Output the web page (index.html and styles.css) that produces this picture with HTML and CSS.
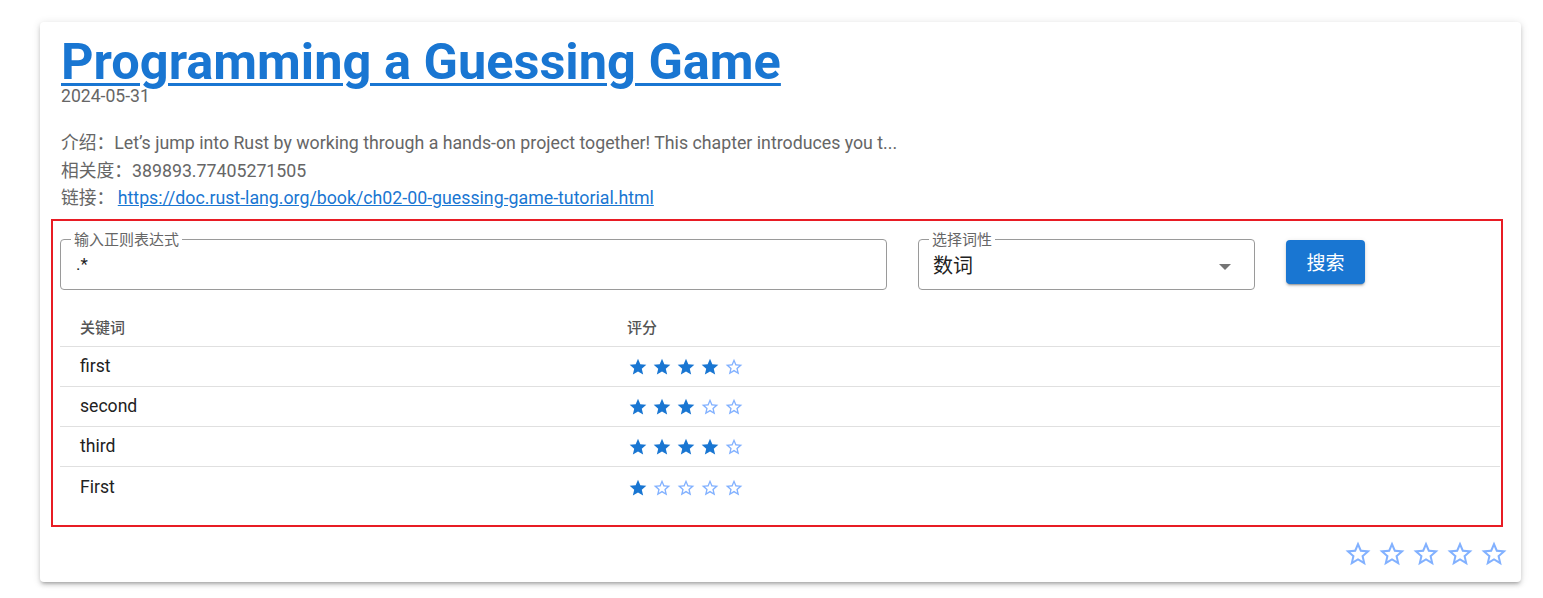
FILE: index.html
```html
<!DOCTYPE html>
<html lang="zh">
<head>
<meta charset="utf-8">
<title>Programming a Guessing Game</title>
<link rel="stylesheet" href="styles.css">
</head>
<body>
<div class="page">
  <div class="card">
    <div class="header">
      <a class="title" href="#">Programming a Guessing Game</a>
      <div class="date">2024-05-31</div>
      <div class="desc">
        <div class="line">介绍：Let’s jump into Rust by working through a hands-on project together! This chapter introduces you t...</div>
        <div class="line">相关度：389893.77405271505</div>
        <div class="line">链接：<a class="link" href="#">https://doc.rust-lang.org/book/ch02-00-guessing-game-tutorial.html</a></div>
      </div>
    </div>

    <div class="panel">
      <div class="form-row">
        <fieldset class="field field-regex">
          <legend>输入正则表达式</legend>
          <div class="value">.*</div>
        </fieldset>
        <fieldset class="field field-select">
          <legend>选择词性</legend>
          <div class="value select-value"><span>数词</span><span class="arrow"></span></div>
        </fieldset>
        <button class="btn" type="button">搜索</button>
      </div>

      <div class="table">
        <div class="tr th">
          <div class="c1">关键词</div>
          <div class="c2">评分</div>
        </div>
        <div class="tr">
          <div class="c1">first</div>
          <div class="c2 stars">
            <svg viewBox="0 0 24 24" class="s on"><path d="M12 17.27L18.18 21l-1.64-7.03L22 9.24l-7.19-.61L12 2 9.19 8.63 2 9.24l5.46 4.73L5.82 21z"/></svg>
            <svg viewBox="0 0 24 24" class="s on"><path d="M12 17.27L18.18 21l-1.64-7.03L22 9.24l-7.19-.61L12 2 9.19 8.63 2 9.24l5.46 4.73L5.82 21z"/></svg>
            <svg viewBox="0 0 24 24" class="s on"><path d="M12 17.27L18.18 21l-1.64-7.03L22 9.24l-7.19-.61L12 2 9.19 8.63 2 9.24l5.46 4.73L5.82 21z"/></svg>
            <svg viewBox="0 0 24 24" class="s on"><path d="M12 17.27L18.18 21l-1.64-7.03L22 9.24l-7.19-.61L12 2 9.19 8.63 2 9.24l5.46 4.73L5.82 21z"/></svg>
            <svg viewBox="0 0 24 24" class="s off"><path d="M22 9.24l-7.19-.62L12 2 9.19 8.63 2 9.24l5.46 4.73L5.82 21 12 17.27 18.18 21l-1.63-7.03L22 9.24zM12 15.4l-3.76 2.27 1-4.28-3.32-2.88 4.38-.38L12 6.1l1.71 4.04 4.38.38-3.32 2.88 1 4.28L12 15.4z"/></svg>
          </div>
        </div>
        <div class="tr">
          <div class="c1">second</div>
          <div class="c2 stars">
            <svg viewBox="0 0 24 24" class="s on"><path d="M12 17.27L18.18 21l-1.64-7.03L22 9.24l-7.19-.61L12 2 9.19 8.63 2 9.24l5.46 4.73L5.82 21z"/></svg>
            <svg viewBox="0 0 24 24" class="s on"><path d="M12 17.27L18.18 21l-1.64-7.03L22 9.24l-7.19-.61L12 2 9.19 8.63 2 9.24l5.46 4.73L5.82 21z"/></svg>
            <svg viewBox="0 0 24 24" class="s on"><path d="M12 17.27L18.18 21l-1.64-7.03L22 9.24l-7.19-.61L12 2 9.19 8.63 2 9.24l5.46 4.73L5.82 21z"/></svg>
            <svg viewBox="0 0 24 24" class="s off"><path d="M22 9.24l-7.19-.62L12 2 9.19 8.63 2 9.24l5.46 4.73L5.82 21 12 17.27 18.18 21l-1.63-7.03L22 9.24zM12 15.4l-3.76 2.27 1-4.28-3.32-2.88 4.38-.38L12 6.1l1.71 4.04 4.38.38-3.32 2.88 1 4.28L12 15.4z"/></svg>
            <svg viewBox="0 0 24 24" class="s off"><path d="M22 9.24l-7.19-.62L12 2 9.19 8.63 2 9.24l5.46 4.73L5.82 21 12 17.27 18.18 21l-1.63-7.03L22 9.24zM12 15.4l-3.76 2.27 1-4.28-3.32-2.88 4.38-.38L12 6.1l1.71 4.04 4.38.38-3.32 2.88 1 4.28L12 15.4z"/></svg>
          </div>
        </div>
        <div class="tr">
          <div class="c1">third</div>
          <div class="c2 stars">
            <svg viewBox="0 0 24 24" class="s on"><path d="M12 17.27L18.18 21l-1.64-7.03L22 9.24l-7.19-.61L12 2 9.19 8.63 2 9.24l5.46 4.73L5.82 21z"/></svg>
            <svg viewBox="0 0 24 24" class="s on"><path d="M12 17.27L18.18 21l-1.64-7.03L22 9.24l-7.19-.61L12 2 9.19 8.63 2 9.24l5.46 4.73L5.82 21z"/></svg>
            <svg viewBox="0 0 24 24" class="s on"><path d="M12 17.27L18.18 21l-1.64-7.03L22 9.24l-7.19-.61L12 2 9.19 8.63 2 9.24l5.46 4.73L5.82 21z"/></svg>
            <svg viewBox="0 0 24 24" class="s on"><path d="M12 17.27L18.18 21l-1.64-7.03L22 9.24l-7.19-.61L12 2 9.19 8.63 2 9.24l5.46 4.73L5.82 21z"/></svg>
            <svg viewBox="0 0 24 24" class="s off"><path d="M22 9.24l-7.19-.62L12 2 9.19 8.63 2 9.24l5.46 4.73L5.82 21 12 17.27 18.18 21l-1.63-7.03L22 9.24zM12 15.4l-3.76 2.27 1-4.28-3.32-2.88 4.38-.38L12 6.1l1.71 4.04 4.38.38-3.32 2.88 1 4.28L12 15.4z"/></svg>
          </div>
        </div>
        <div class="tr last">
          <div class="c1">First</div>
          <div class="c2 stars">
            <svg viewBox="0 0 24 24" class="s on"><path d="M12 17.27L18.18 21l-1.64-7.03L22 9.24l-7.19-.61L12 2 9.19 8.63 2 9.24l5.46 4.73L5.82 21z"/></svg>
            <svg viewBox="0 0 24 24" class="s off"><path d="M22 9.24l-7.19-.62L12 2 9.19 8.63 2 9.24l5.46 4.73L5.82 21 12 17.27 18.18 21l-1.63-7.03L22 9.24zM12 15.4l-3.76 2.27 1-4.28-3.32-2.88 4.38-.38L12 6.1l1.71 4.04 4.38.38-3.32 2.88 1 4.28L12 15.4z"/></svg>
            <svg viewBox="0 0 24 24" class="s off"><path d="M22 9.24l-7.19-.62L12 2 9.19 8.63 2 9.24l5.46 4.73L5.82 21 12 17.27 18.18 21l-1.63-7.03L22 9.24zM12 15.4l-3.76 2.27 1-4.28-3.32-2.88 4.38-.38L12 6.1l1.71 4.04 4.38.38-3.32 2.88 1 4.28L12 15.4z"/></svg>
            <svg viewBox="0 0 24 24" class="s off"><path d="M22 9.24l-7.19-.62L12 2 9.19 8.63 2 9.24l5.46 4.73L5.82 21 12 17.27 18.18 21l-1.63-7.03L22 9.24zM12 15.4l-3.76 2.27 1-4.28-3.32-2.88 4.38-.38L12 6.1l1.71 4.04 4.38.38-3.32 2.88 1 4.28L12 15.4z"/></svg>
            <svg viewBox="0 0 24 24" class="s off"><path d="M22 9.24l-7.19-.62L12 2 9.19 8.63 2 9.24l5.46 4.73L5.82 21 12 17.27 18.18 21l-1.63-7.03L22 9.24zM12 15.4l-3.76 2.27 1-4.28-3.32-2.88 4.38-.38L12 6.1l1.71 4.04 4.38.38-3.32 2.88 1 4.28L12 15.4z"/></svg>
          </div>
        </div>
      </div>
    </div>

    <div class="rating">
      <svg viewBox="0 0 24 24" class="big"><path d="M22 9.24l-7.19-.62L12 2 9.19 8.63 2 9.24l5.46 4.73L5.82 21 12 17.27 18.18 21l-1.63-7.03L22 9.24zM12 15.4l-3.76 2.27 1-4.28-3.32-2.88 4.38-.38L12 6.1l1.71 4.04 4.38.38-3.32 2.88 1 4.28L12 15.4z"/></svg>
      <svg viewBox="0 0 24 24" class="big"><path d="M22 9.24l-7.19-.62L12 2 9.19 8.63 2 9.24l5.46 4.73L5.82 21 12 17.27 18.18 21l-1.63-7.03L22 9.24zM12 15.4l-3.76 2.27 1-4.28-3.32-2.88 4.38-.38L12 6.1l1.71 4.04 4.38.38-3.32 2.88 1 4.28L12 15.4z"/></svg>
      <svg viewBox="0 0 24 24" class="big"><path d="M22 9.24l-7.19-.62L12 2 9.19 8.63 2 9.24l5.46 4.73L5.82 21 12 17.27 18.18 21l-1.63-7.03L22 9.24zM12 15.4l-3.76 2.27 1-4.28-3.32-2.88 4.38-.38L12 6.1l1.71 4.04 4.38.38-3.32 2.88 1 4.28L12 15.4z"/></svg>
      <svg viewBox="0 0 24 24" class="big"><path d="M22 9.24l-7.19-.62L12 2 9.19 8.63 2 9.24l5.46 4.73L5.82 21 12 17.27 18.18 21l-1.63-7.03L22 9.24zM12 15.4l-3.76 2.27 1-4.28-3.32-2.88 4.38-.38L12 6.1l1.71 4.04 4.38.38-3.32 2.88 1 4.28L12 15.4z"/></svg>
      <svg viewBox="0 0 24 24" class="big"><path d="M22 9.24l-7.19-.62L12 2 9.19 8.63 2 9.24l5.46 4.73L5.82 21 12 17.27 18.18 21l-1.63-7.03L22 9.24zM12 15.4l-3.76 2.27 1-4.28-3.32-2.88 4.38-.38L12 6.1l1.71 4.04 4.38.38-3.32 2.88 1 4.28L12 15.4z"/></svg>
    </div>
  </div>
</div>
</body>
</html>
```

FILE: styles.css
```css
* { box-sizing: border-box; }

html, body {
  margin: 0;
  padding: 0;
  background: #fff;
  font-family: Roboto, "Noto Sans CJK SC", sans-serif;
}

.page {
  padding: 22px 22px 17px 40px;
}

.card {
  width: 1481px;
  background: #fff;
  border-radius: 4px;
  box-shadow: 0 3px 3px -2px rgba(0,0,0,0.2), 0 3px 4px 0 rgba(0,0,0,0.14), 0 1px 8px 0 rgba(0,0,0,0.12);
  padding: 14px 18px 13px 11px;
}

.header {
  padding-left: 10px;
}

.title {
  display: block;
  width: max-content;
  font-size: 50.5px;
  font-weight: 700;
  line-height: 51px;
  color: #1976d2;
  text-decoration: underline;
  text-decoration-thickness: 3px;
  text-underline-offset: 4px;
}

.date {
  font-size: 17.6px;
  line-height: 18px;
  color: #666;
}

.desc {
  margin-top: 25px;
  font-size: 17.75px;
  line-height: 27.5px;
  color: #666;
}

.link {
  margin-left: 3.5px;
  color: #1976d2;
  text-decoration: underline;
}

.panel {
  margin-top: 6px;
  width: 1452px;
  border: 2px solid #e81c24;
  padding: 12px 1px 18px 7px;
}

.form-row {
  display: flex;
  align-items: flex-start;
  gap: 31px;
}

.field {
  margin: 0;
  padding: 0 14px;
  border: 1px solid #9a9a9a;
  border-radius: 4px;
  min-width: 0;
}

.field legend {
  margin-left: -4px;
  padding: 0 3px;
  font-size: 15px;
  line-height: 14px;
  color: #666;
}

.field-regex { width: 827px; }
.field-select { width: 337px; padding-right: 23px; }

.value {
  font-size: 17px;
  line-height: 20px;
  padding: 7px 0 15px 1px;
  color: #222;
}

.select-value {
  display: flex;
  align-items: center;
  justify-content: space-between;
  font-size: 20px;
  line-height: 24px;
  padding: 7px 0 11px 0;
}

.arrow {
  width: 0;
  height: 0;
  border-left: 6px solid transparent;
  border-right: 6px solid transparent;
  border-top: 6px solid #757575;
  margin-top: 2px;
}

.btn {
  margin-top: 7px;
  width: 79px;
  height: 44px;
  border: none;
  border-radius: 4px;
  background: #1976d2;
  color: #fff;
  font-family: Roboto, "Noto Sans CJK SC", sans-serif;
  font-size: 19px;
  box-shadow: 0 3px 1px -2px rgba(0,0,0,0.2), 0 2px 2px 0 rgba(0,0,0,0.14), 0 1px 5px 0 rgba(0,0,0,0.12);
  cursor: pointer;
}

.table {
  margin-top: 17px;
}

.tr {
  display: flex;
  align-items: center;
  height: 40px;
  border-bottom: 1px solid #e0e0e0;
  font-size: 17.6px;
  color: #222;
}

.tr.last { border-bottom: none; }

.th {
  font-size: 15px;
  font-weight: 500;
  color: #555;
}

.c1 {
  width: 547px;
  padding-left: 20px;
}

.c2 {
  padding-left: 20px;
}

.stars {
  display: flex;
  gap: 4px;
  padding-left: 21px;
  padding-top: 2px;
}

.s {
  width: 20px;
  height: 20px;
  display: block;
}

.s.on { fill: #1976d2; }
.s.off { fill: #82b1ff; }

.rating {
  display: flex;
  justify-content: flex-end;
  gap: 4px;
  margin-top: 12px;
  margin-right: -6px;
}

.big {
  width: 30px;
  height: 30px;
  fill: #82b1ff;
  display: block;
}
```
